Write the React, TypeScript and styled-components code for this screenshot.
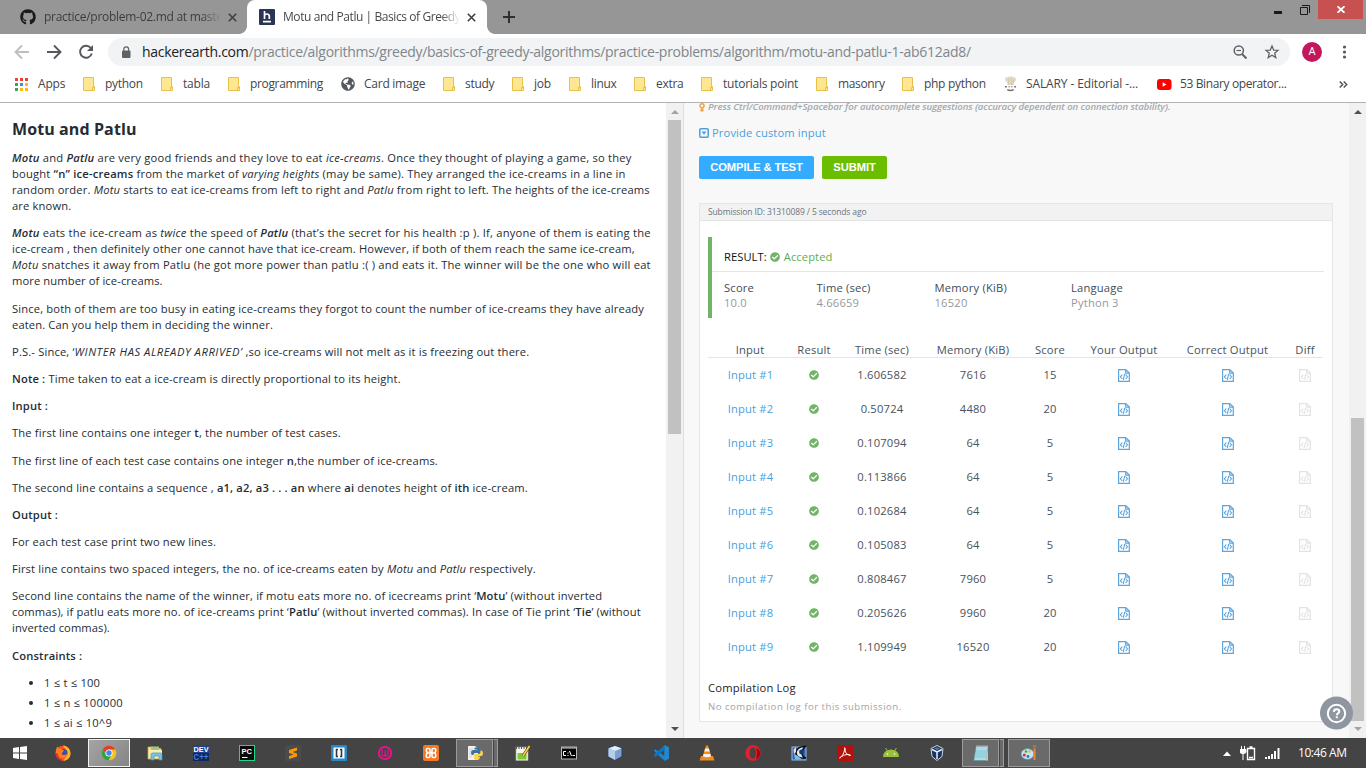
import React from "react";
import styled, { createGlobalStyle, css } from "styled-components";
import { FaGithub, FaCheckCircle, FaGlobeAmericas } from "react-icons/fa";

const Global = createGlobalStyle`
  * { box-sizing: border-box; }
  html, body { margin: 0; padding: 0; overflow: hidden; }
  body { font-family: "Open Sans", "Noto Sans", sans-serif; }
  svg { display: block; flex: none; }
`;

const Screen = styled.div`
  width: 1366px;
  height: 768px;
  display: flex;
  flex-direction: column;
  overflow: hidden;
  background: #fff;
`;

/* ---------- browser chrome ---------- */

const TabStrip = styled.div`
  height: 34px;
  flex: none;
  display: flex;
  background: #969696;
`;

const Tab = styled.div<{ $active?: boolean }>`
  position: relative;
  display: flex;
  align-items: center;
  width: ${(p) => (p.$active ? 240 : 247)}px;
  height: 34px;
  padding-left: ${(p) => (p.$active ? 12 : 20)}px;
  background: ${(p) => (p.$active ? "#fff" : "transparent")};
  border-radius: ${(p) => (p.$active ? "8px 8px 0 0" : "0")};
  color: ${(p) => (p.$active ? "#45494d" : "#3b3d40")};
  ${(p) =>
    p.$active &&
    css`
      &::before,
      &::after {
        content: "";
        position: absolute;
        bottom: 0;
        width: 8px;
        height: 8px;
      }
      &::before {
        left: -8px;
        background: radial-gradient(circle at 0 0, #969696 7.5px, #fff 8.2px);
      }
      &::after {
        right: -8px;
        background: radial-gradient(circle at 100% 0, #969696 7.5px, #fff 8.2px);
      }
    `}
`;

const TabTitle = styled.span<{ $spacing: number }>`
  width: 176px;
  margin-left: 8px;
  overflow: hidden;
  white-space: nowrap;
  font-size: 12px;
  line-height: 18px;
  letter-spacing: ${(p) => p.$spacing}px;
  mask-image: linear-gradient(90deg, #000 158px, transparent 177px);
`;

const TabClose = styled.span`
  margin-left: 8px;
`;

const NewTab = styled.div`
  padding: 11px 0 0 16px;
  flex: 1;
`;

const WindowButtons = styled.div`
  display: flex;
  align-items: flex-start;
  padding-right: 3px;
`;

const WindowButton = styled.div<{ $w: number; $close?: boolean }>`
  width: ${(p) => p.$w}px;
  height: 19px;
  display: flex;
  align-items: center;
  justify-content: center;
  background: ${(p) => (p.$close ? "#c75050" : "transparent")};
`;

const Toolbar = styled.div`
  height: 36px;
  flex: none;
  display: flex;
  align-items: center;
  padding-left: 14px;
`;

const NavIcons = styled.div`
  display: flex;
  gap: 16px;
  width: 94px;
`;

const Omnibox = styled.div`
  display: flex;
  align-items: center;
  width: 1182px;
  height: 28px;
  padding: 0 10px 0 13px;
  border-radius: 14px;
  background: #f1f3f4;
`;

const Url = styled.div`
  flex: 1;
  margin-left: 11px;
  font-size: 14px;
  line-height: 20px;
  letter-spacing: -0.29px;
  color: #80868b;
  white-space: nowrap;
  b {
    font-weight: 400;
    color: #202124;
  }
`;

const OmniActions = styled.div`
  display: flex;
  gap: 16px;
`;

const Avatar = styled.div`
  width: 20px;
  height: 20px;
  margin: 0 14px 0 12px;
  border-radius: 50%;
  background: #c2185b;
  color: #fff;
  font: 11px/20px Roboto, sans-serif;
  text-align: center;
`;

const Bookmarks = styled.div`
  height: 33px;
  flex: none;
  display: flex;
  align-items: center;
  padding: 0 18px 4px 15px;
  border-bottom: 1px solid #b2b2b4;
`;

const Bookmark = styled.div<{ $w: number }>`
  width: ${(p) => p.$w}px;
  flex: none;
  display: flex;
  align-items: center;
  white-space: nowrap;
  color: #43464a;
`;

const BookmarkIcon = styled.span<{ $w: number }>`
  width: ${(p) => p.$w}px;
  flex: none;
`;

const BookmarkLabel = styled.span<{ $spacing: number }>`
  font-size: 12px;
  line-height: 18px;
  letter-spacing: ${(p) => p.$spacing}px;
`;

/* ---------- page ---------- */

const Page = styled.div`
  height: 635px;
  flex: none;
  display: flex;
  overflow: hidden;
`;

const Problem = styled.article`
  width: 666px;
  flex: none;
  padding: 16px 0 0 12px;
  color: #252c33;
  font-size: 11.2px;
  line-height: 16px;
  letter-spacing: 0.15px;
  white-space: nowrap;
  overflow: hidden;
  strong {
    font-weight: 600;
  }
`;

const Title = styled.h1`
  margin: 0 0 11.21px;
  font-size: 16px;
  line-height: 20px;
  font-weight: 700;
  letter-spacing: 0.1px;
`;

const Para = styled.p`
  margin: 0 0 11.2px;
`;

const Line = styled.span<{ $spacing?: number }>`
  display: block;
  letter-spacing: ${(p) => p.$spacing ?? 0.15}px;
`;

const Shout = styled.em`
  letter-spacing: 0.55px;
`;

const Limits = styled.ul`
  margin: 0;
  padding-left: 32px;
  letter-spacing: 0.2px;
  li {
    margin-bottom: 4px;
  }
`;

const Scroll = styled.div`
  width: 17px;
  flex: none;
  display: flex;
  flex-direction: column;
  align-items: center;
  background: #f1f1f1;
`;

const Arrow = styled.i<{ $down?: boolean; $dark?: boolean }>`
  width: 0;
  height: 0;
  margin: ${(p) => (p.$down ? "auto 0 7px" : "7px 0 6px")};
  border: 4px solid transparent;
  border-top: ${(p) => (p.$down ? `4px solid ${p.$dark ? "#505050" : "#a3a3a3"}` : "0")};
  border-bottom: ${(p) => (p.$down ? "0" : `4px solid ${p.$dark ? "#505050" : "#a3a3a3"}`)};
`;

const Thumb = styled.div<{ $top: number; $h: number }>`
  width: 13px;
  height: ${(p) => p.$h}px;
  margin-top: ${(p) => p.$top}px;
  background: #c1c1c1;
`;

const Workspace = styled.section`
  flex: 1;
  padding-left: 16px;
  background: linear-gradient(90deg, #dedede 1px, #f8f8f8 1px);
  color: #46525e;
  font-size: 11.2px;
  letter-spacing: 0.2px;
  white-space: nowrap;
  overflow: hidden;
`;

const Hint = styled.div`
  display: flex;
  align-items: center;
  height: 12px;
  margin-top: -2px;
  gap: 3px;
  font-size: 9.6px;
  line-height: 12px;
  font-style: italic;
  font-weight: 600;
  letter-spacing: -0.08px;
  color: #a3a9ae;
`;

const CustomInput = styled.a`
  display: flex;
  align-items: center;
  gap: 3px;
  height: 16px;
  margin-top: 12px;
  line-height: 15px;
  color: #4a9fdf;
  letter-spacing: 0.12px;
  padding-bottom: 1px;
`;

const Actions = styled.div`
  display: flex;
  gap: 8px;
  margin-top: 15px;
`;

const Button = styled.button<{ $w: number; $bg: string }>`
  width: ${(p) => p.$w}px;
  height: 23px;
  padding: 0;
  border: 0;
  border-radius: 2px;
  background: ${(p) => p.$bg};
  color: #fff;
  font: bold 11.2px/23px "Liberation Sans", Arial, sans-serif;
  letter-spacing: -0.1px;
`;

const Card = styled.div`
  width: 634px;
  height: 519px;
  margin-top: 24px;
  border: 1px solid #e4e5e6;
  background: #fff;
`;

const CardHead = styled.div`
  height: 17px;
  padding-left: 8px;
  border-bottom: 1px solid #e4e5e6;
  background: #f2f2f2;
  font-size: 8.5px;
  line-height: 16px;
  letter-spacing: -0.13px;
  color: #6c757d;
`;

const Result = styled.div`
  height: 81px;
  margin: 16px 8px 0;
  border-left: 4px solid #71b367;
`;

const ResultLine = styled.div`
  display: flex;
  align-items: center;
  height: 35px;
  padding: 6px 0 0 12px;
  border-bottom: 1px solid #e4e5e6;
  color: #111;
  gap: 3.5px;
  font-size: 11.2px;
  line-height: 16px;
  letter-spacing: 0.05px;
  span {
    color: #5cb052;
    letter-spacing: 0.1px;
  }
`;

const Stats = styled.dl`
  display: grid;
  grid-template-columns: 92.5px 118px 136.5px auto;
  margin: 0;
  padding: 8px 0 0 12px;
  line-height: 15px;
  dt {
    font-weight: 500;
    color: #3f4b57;
  }
  dd {
    margin: 0;
    color: #95999d;
  }
`;

const Table = styled.div`
  margin: 23px 9px 0 8px;
`;

const Row = styled.div<{ $head?: boolean }>`
  display: grid;
  grid-template-columns: 84px 44px 92px 90px 64px 84px 123px 32px;
  align-items: center;
  justify-items: center;
  height: ${(p) => (p.$head ? 17 : 34)}px;
  border-bottom: ${(p) => (p.$head ? "1px solid #e4e5e6" : "0")};
  font-weight: ${(p) => (p.$head ? 500 : 400)};
  span,
  a {
    padding-bottom: ${(p) => (p.$head ? 0 : 2)}px;
  }
`;

const InputLink = styled.a`
  padding-left: 1px;
  letter-spacing: 0.15px;
  color: #4a9fdf;
`;

const Log = styled.div`
  margin: 15px 0 0 8px;
  line-height: 18px;
  color: #222;
  small {
    display: block;
    padding-top: 1px;
    font-size: 9.6px;
    letter-spacing: 0.5px;
    color: #a3a3a3;
  }
`;

const Help = styled.div`
  position: absolute;
  left: 1320px;
  top: 696px;
`;

/* ---------- taskbar ---------- */

const Taskbar = styled.div`
  height: 30px;
  flex: none;
  display: flex;
  background: #444;
  color: #fff;
`;

const Slot = styled.div<{ $w?: number }>`
  width: ${(p) => p.$w ?? 46}px;
  flex: none;
  display: flex;
  align-items: center;
  justify-content: center;
`;

const Running = styled.div<{ $w: number; $active?: boolean }>`
  width: ${(p) => p.$w}px;
  height: 28px;
  display: flex;
  align-items: center;
  justify-content: center;
  border: 1px solid ${(p) => (p.$active ? "#f2f2f2" : "#9c9c9c")};
  background: ${(p) => (p.$active ? "linear-gradient(135deg,#a4a4a4,#858585)" : "#6a6a6a")};
`;

const Stack = styled.div`
  width: 5px;
  height: 28px;
  border: 1px solid #9c9c9c;
  border-left-color: #444;
  background: #6a6a6a;
`;

const Tray = styled.div`
  margin-left: auto;
  display: flex;
  align-items: center;
  gap: 9px;
  padding-right: 18px;
`;

const Clock = styled.span`
  width: 50px;
  margin-left: 9px;
  font-size: 12px;
  line-height: 18px;
  letter-spacing: -0.45px;
  white-space: nowrap;
`;

/* ---------- icons ---------- */

const Folder = () => (
  <svg width="13" height="15" viewBox="0 0 13 15">
    <path d="M.5 .5H10.5V9.5H11.5V13.5H.5Z" fill="#ffe791" stroke="#e8c04a" />
    <path d="M9.5 13.5V10.5H11.5" fill="none" stroke="#e8c04a" />
  </svg>
);

const AppsGrid = () => {
  const colors = ["#ea4335", "#ea4335", "#ea4335", "#34a853", "#4285f4", "#fbbc04", "#34a853", "#fbbc04", "#fbbc04"];
  return (
    <svg width="13" height="13">
      {colors.map((c, i) => (
        <rect key={i} x={(i % 3) * 5} y={Math.floor(i / 3) * 5} width="3" height="3" fill={c} />
      ))}
    </svg>
  );
};

const Chef = () => (
  <svg width="13" height="16" viewBox="0 0 14 16">
    <path d="M1 3C1 1 4 0 7 0s6 1 6 3-2 3-2.500 4v2h-7V7C3 6 1 5 1 3Z" fill="#e6dcc6" />
    <path d="M5 2v7M8 1v8M10.500 3L9.500 9" stroke="#cdbf9c" strokeWidth=".8" />
    <path d="M1 11h2M5 11h1M8 11h1M11 11h2M3.500 14q3.500 2 7 0" fill="none" stroke="#77706a" strokeWidth="1.500" />
  </svg>
);

const YouTube = () => (
  <svg width="15" height="11" viewBox="0 0 15 11">
    <rect width="14.500" height="11" rx="3" fill="#f00" />
    <path d="M5.700 3.200L9.500 5.500 5.700 7.800Z" fill="#fff" />
  </svg>
);

const Cross = () => (
  <svg width="9" height="9" viewBox="0 0 9 9">
    <path d="M.8 .8L8.200 8.200M8.200 .8L.8 8.200" stroke="#3c4043" strokeWidth="1.600" />
  </svg>
);

const FileCode = ({ color, shade }: { color: string; shade: string }) => (
  <svg width="12" height="13" viewBox="0 0 12 13">
    <path d="M.6 .6H7.800L11.300 4V12.400H.6Z" fill="none" stroke={color} strokeWidth="1.200" />
    <path d="M7.500 .6V4.300H11.300Z" fill={shade} stroke={color} strokeWidth=".9" />
    <path d="M4.300 5.500L2.400 7.800 4.300 10M7.600 5.500L9.500 7.800 7.600 10M6.700 4.800L5.300 10.800" fill="none" stroke={color} strokeWidth="1.100" />
  </svg>
);

const Icon = ({ children, s = 16, v = 16 }: { children: React.ReactNode; s?: number; v?: number }) => (
  <svg width={s} height={s} viewBox={`0 0 ${v} ${v}`}>
    {children}
  </svg>
);

const Windows = () => (
  <Icon s={14} v={14}>
    <path d="M0 2L6 1V6.500H0ZM7 .9L14 0V6.500H7ZM0 7.500H6V13L0 12ZM7 7.500H14V14L7 13.100Z" fill="#fff" />
  </Icon>
);

const Firefox = () => (
  <Icon>
    <circle cx="8" cy="8.300" r="7.500" fill="#f5571d" />
    <path d="M8 .5C13 1 16 5 15.400 9.500 15 13 12 15.800 8 15.800L11 12 12.500 7Z" fill="#ffb81f" />
    <circle cx="8.500" cy="8" r="4" fill="#3b4fb0" />
    <path d="M1 5L2 1.500 5 4C7 3.500 8 5 9 5.500L7.500 7.500C6 8 7 10.500 9.500 10 11 10 12 9 12.500 8 13 12 9 13.500 6.500 13 2 12 0 9 1 5Z" fill="#ff7b1b" />
    <path d="M.8 8C1 13 5 16 9 15.700 5 14.500 3 12 3 9Z" fill="#e4204e" />
  </Icon>
);

const Chrome = () => (
  <Icon>
    <circle cx="8" cy="8" r="7.300" fill="#fbc116" />
    <path d="M1.700 4.300A7.300 7.300 0 0 1 14.400 4.500H8L5 9.500Z" fill="#e33b2e" />
    <path d="M1.700 4.300A7.300 7.300 0 0 0 7.500 15.300L10.800 9.800 5 9.800Z" fill="#2ba24c" />
    <circle cx="8" cy="8" r="3.600" fill="#fff" />
    <circle cx="8" cy="8" r="2.700" fill="#4285f4" />
  </Icon>
);

const Explorer = () => (
  <Icon>
    <path d="M1 2H6L7 3.500H14V14H1Z" fill="#f4e08e" stroke="#cdb25a" strokeWidth=".7" />
    <path d="M4 1.500H12V5H4Z" fill="#9fc58b" />
    <path d="M2 5H15V13H2Z" fill="#f9edb0" />
    <path d="M4 15V9.500Q4 8 5.500 8H13.500Q15 8 15 9.500V15H12V11H7V15Z" fill="#79c3e8" stroke="#4b91bd" strokeWidth=".7" />
  </Icon>
);

const PixelText = styled.text`
  font-family: "Liberation Sans", sans-serif;
  font-weight: 700;
`;

const DevCpp = () => (
  <Icon>
    <rect width="16" height="16" fill="#22418a" />
    <rect y="8" width="16" height="8" fill="#12285c" />
    <PixelText x="0.500" y="7" fontSize="7.500" fill="#fff" textLength="15" lengthAdjust="spacingAndGlyphs">DEV</PixelText>
    <PixelText x="0.500" y="15" fontSize="8.500" fill="#3f7fe0" textLength="15" lengthAdjust="spacingAndGlyphs">C++</PixelText>
  </Icon>
);

const PyCharm = () => (
  <Icon>
    <rect x=".5" y=".5" width="15" height="15" fill="#080b0a" stroke="#21d789" />
    <PixelText x="2.500" y="8.800" fontSize="8" fill="#fff" textLength="10.500" lengthAdjust="spacingAndGlyphs">PC</PixelText>
    <path d="M3 12.500H8.500" stroke="#fff" />
  </Icon>
);

const Sublime = () => (
  <Icon>
    <rect width="16" height="16" rx="1" fill="#4b4b4b" />
    <path d="M12 2.500V5.500L7.500 7 12 8.500V11.500L4 14V11L8.500 9.500 4 8V5Z" fill="#ff9800" />
  </Icon>
);

const Brackets = () => (
  <Icon>
    <rect width="16" height="16" rx="1" fill="#2488c9" />
    <rect x="2.500" y="2.500" width="11" height="11" fill="#fff" />
    <path d="M7 4.500H5.500V11.500H7M9 4.500H10.500V11.500H9" fill="none" stroke="#353535" strokeWidth="1.600" />
  </Icon>
);

const Wamp = () => (
  <Icon>
    <circle cx="8" cy="8" r="6.200" fill="none" stroke="#f70d90" strokeWidth="1.800" />
    <path d="M5 4.500V9.500Q5 11 6.500 11T8 9.500V5.500M8 9.500Q8 11 9.500 11T11 9.500V4.500" fill="none" stroke="#f70d90" strokeWidth="1.100" />
  </Icon>
);

const Xampp = () => (
  <Icon>
    <rect width="16" height="16" rx="2" fill="#f07a25" />
    <path d="M5.500 7.300H4.500Q3.300 7.300 3.300 6V4.800Q3.300 3.500 4.500 3.500H5.800Q7 3.500 7 4.800V6Q7 8 9 8H11.500Q12.700 8 12.700 9.500V11.200Q12.700 12.500 11.500 12.500H10.200Q9 12.500 9 11.200V4.800Q9 3.500 10.200 3.500H11.500Q12.700 3.500 12.700 4.800V6Q12.700 7.500 11 8H4.500Q3.300 8.500 3.300 9.800V11.200Q3.300 12.500 4.500 12.500H5.800Q7 12.500 7 11.200V9" fill="none" stroke="#fff" strokeWidth="1.500" />
  </Icon>
);

const Python = () => (
  <Icon>
    <path d="M1 1H8L11 3.500V15H1Z" fill="#f0f0f0" />
    <path d="M2 4H6M2 6H5M2 8H4M2 10H5M2 12H5" stroke="#ccc" strokeWidth=".7" />
    <path d="M8 2.500H11.500Q13 2.500 13 4V7Q13 8 12 8H8Q6.500 8 6.500 10H5.500Q4 10 4 7.500T6 5H10V4.500H7.500Q7 3 8 2.500Z" fill="#38729f" />
    <path d="M13.500 5.500H14.500Q16 6 16 8.500T14 11H10.500V11.500H13Q13 15 10 15T7 13V10.500Q7 9 8.500 9H12Q13.500 9 13.500 7Z" fill="#ffd343" />
  </Icon>
);

const NotepadPlus = () => (
  <Icon>
    <rect x="1" y="2" width="12" height="13.500" fill="#f2f5ec" stroke="#a7aa9d" strokeWidth=".6" />
    <path d="M1.500 1V4M4 1V4M6.500 1V4M9 1V4M11.500 1V4" stroke="#555" />
    <rect x="2.500" y="8" width="9" height="6.500" fill="#7dcc2d" />
    <path d="M14.500 1L8 11" stroke="#5b4723" strokeWidth="3" />
    <path d="M14.500 1L8 11" stroke="#ffc84a" strokeWidth="1.700" />
  </Icon>
);

const Cmd = () => (
  <Icon>
    <rect x=".5" y="2" width="15" height="12" fill="#000" stroke="#b8b8b8" />
    <path d="M1 3H15" stroke="#ddd" />
    <path d="M5 6.500H2.500V10.500H5M7 7.500V8.500M7 10V11M8.500 6L10.500 11M11.500 10.500H14" fill="none" stroke="#fff" />
  </Icon>
);

const Cube = () => (
  <Icon>
    <path d="M8 .5L15 3V11.500L8 15.500 1 11.500V3Z" fill="#7e9fce" stroke="#28416d" />
    <path d="M8 1L14.500 3.300 8 6 1.500 3.300Z" fill="#e2edf8" />
    <path d="M1.500 3.500L8 6V15L1.500 11.500Z" fill="#b7cde8" />
  </Icon>
);

const VSCode = () => (
  <Icon>
    <path d="M11.500 .3L15.800 2.300V13.700L11.500 15.700 .8 5.800 2.500 4.200 11.500 11.200V4.800L2.500 11.800 .8 10.200Z" fill="#1a86d2" />
    <path d="M11.500 .3L15.800 2.300V13.700L11.500 15.700Z" fill="#2489ca" />
    <path d="M.8 10.200L11.500 .3V4.800L2.500 11.800Z" fill="#0b72bd" />
  </Icon>
);

const Vlc = () => (
  <Icon>
    <path d="M2 11H14L15.500 15.500H.5Z" fill="#ef8a1d" />
    <path d="M7 .5H9L12.500 12Q8 14.500 3.500 12Z" fill="#f58b15" />
    <path d="M6.200 3.500H9.800L10.800 6.500H5.300ZM4.500 9H11.500L12 11.500Q8 13 4 11.500Z" fill="#f1f1f1" />
  </Icon>
);

const Opera = () => (
  <Icon>
    <ellipse cx="8" cy="8" rx="7.700" ry="7.900" fill="#e2202c" />
    <path d="M11.200 3Q16 5 15.200 10 14 13 11 14Q13 8 11.200 3Z" fill="#a70014" />
    <ellipse cx="7.800" cy="8" rx="3.200" ry="5.700" fill="#444" />
  </Icon>
);

const EyeTool = () => (
  <Icon>
    <rect x="1" y="2" width="14" height="13" fill="#2a62bd" stroke="#98bce9" />
    <path d="M5 7Q7 1 14.500 1.500Q11 4 11 8T15 13Q5 14 5 7Z" fill="#dbe9f7" stroke="#0b0b0b" strokeWidth="1.400" />
    <circle cx="10.500" cy="7" r="2.400" fill="#153b70" />
    <path d="M3 9L7 11 11 14.500H4Z" fill="#79c0e9" />
    <path d="M2.500 4.500L5 2V7L3 9Z" fill="#f6dfb0" />
  </Icon>
);

const Acrobat = () => (
  <Icon>
    <rect width="16" height="16" fill="#b3110c" />
    <path d="M3 13C5 12 8 6.500 7.500 3.500 7 2 9 3 8 5 8 8 11 10.500 13.500 10.500 14 9 8 9 4.500 11.500 2.500 12.500 2 13.500 3 13Z" fill="none" stroke="#fff" strokeWidth="1" />
  </Icon>
);

const Android = () => (
  <Icon>
    <path d="M0 12Q0 5 8 4.500 16 5 16 12Z" fill="#9ac03c" />
    <path d="M2.500 3L4.500 6M13.500 3L11.500 6" stroke="#9ac03c" />
    <circle cx="4.500" cy="9" r=".8" fill="#fff" />
    <circle cx="11.500" cy="9" r=".8" fill="#fff" />
  </Icon>
);

const VirtualBox = () => (
  <Icon>
    <path d="M8 .5L14 3.500 13 11.500 8 15.500 3 11.500 2 3.500Z" fill="#1b3561" stroke="#c6d4e8" />
    <path d="M3 4.500L8 7 13 4.500M8 7V14" fill="none" stroke="#e8eef6" strokeWidth="1.500" />
    <path d="M5 3.500L8 5 11 3.500 8 2.500Z" fill="#5b7dab" />
  </Icon>
);

const Notepad = () => (
  <Icon>
    <path d="M3 2H15L13.500 15.500H.8Z" fill="#a8dde9" stroke="#5d8e9a" strokeWidth=".6" />
    <path d="M3 6H13.500M2.800 8H13.300M2.500 10H13M2.300 12H12.800" stroke="#6fb6c6" strokeWidth=".6" />
    <path d="M4 .5V3M6 .5V3M8 .5V3M10 .5V3M12 .5V3M14 .5V3" stroke="#e5e5e5" />
    <path d="M13 15.500L15 3V15.500Z" fill="#d6c8a0" />
  </Icon>
);

const Paint = () => (
  <Icon>
    <ellipse cx="6.500" cy="9" rx="6.300" ry="5.300" fill="#c6e3f2" stroke="#6ba7c8" strokeWidth=".7" />
    <circle cx="3.300" cy="10" r="1.500" fill="#d2352b" />
    <circle cx="5" cy="6.500" r="1.300" fill="#3bab3f" />
    <circle cx="8.500" cy="6.500" r="1.300" fill="#e4ba22" />
    <circle cx="7" cy="11.500" r="1.400" fill="#3272cb" />
    <path d="M11.500 0H15.500L14.700 4H12.300Z" fill="#a4744b" />
    <path d="M12.500 4H14.500V15H12.500Z" fill="#ee862c" />
  </Icon>
);

/* ---------- data ---------- */

const folderBookmarks: [string, number, number][] = [
  ["python", 78, -0.3],
  ["tabla", 67, -0.2],
  ["programming", 113, -0.35],
];
const moreBookmarks: [string, number, number][] = [
  ["study", 69, -0.3],
  ["job", 57, -0.2],
  ["linux", 65, -0.3],
  ["extra", 67, -0.3],
  ["tutorials point", 115, -0.25],
  ["masonry", 86, -0.35],
  ["php python", 102, -0.3],
];

const runs: [string, string, number][] = [
  ["1.606582", "7616", 15],
  ["0.50724", "4480", 20],
  ["0.107094", "64", 5],
  ["0.113866", "64", 5],
  ["0.102684", "64", 5],
  ["0.105083", "64", 5],
  ["0.808467", "7960", 5],
  ["0.205626", "9960", 20],
  ["1.109949", "16520", 20],
];

const FolderMark = ({ label, w, spacing }: { label: string; w: number; spacing: number }) => (
  <Bookmark $w={w}>
    <BookmarkIcon $w={22}><Folder /></BookmarkIcon>
    <BookmarkLabel $spacing={spacing}>{label}</BookmarkLabel>
  </Bookmark>
);

const apps = [Explorer, DevCpp, PyCharm, Sublime, Brackets, Wamp, Xampp];
const moreApps = [NotepadPlus, Cmd, Cube, VSCode, Vlc, Opera, EyeTool, Acrobat, Android, VirtualBox];

export default function App() {
  return (
    <Screen>
      <Global />
      <TabStrip>
        <Tab>
          <FaGithub size={16} color="#1b1b1b" />
          <TabTitle $spacing={-0.28}>practice/problem-02.md at master</TabTitle>
          <TabClose><Cross /></TabClose>
        </Tab>
        <Tab $active>
          <Icon>
            <rect width="16" height="16" rx="1" fill="#2c3454" />
            <path d="M5.500 2V10M5.500 6.500Q6 5 8 5T10.300 7V10M4 12.700H12" fill="none" stroke="#fff" strokeWidth="1.700" />
          </Icon>
          <TabTitle $spacing={-0.42}>Motu and Patlu | Basics of Greedy</TabTitle>
          <TabClose><Cross /></TabClose>
        </Tab>
        <NewTab>
          <svg width="12" height="12"><path d="M6 0V12M0 6H12" stroke="#2d2f31" strokeWidth="2" /></svg>
        </NewTab>
        <WindowButtons>
          <WindowButton $w={26}>
            <svg width="8" height="8"><path d="M0 6.500H8" stroke="#1a1a1a" strokeWidth="3" /></svg>
          </WindowButton>
          <WindowButton $w={27}>
            <svg width="10" height="10" viewBox="0 0 10 10">
              <path d="M.5 2.500H7.500V9.500H.5ZM2 .5H9.500V8" fill="none" stroke="#1a1a1a" />
            </svg>
          </WindowButton>
          <WindowButton $w={45} $close>
            <svg width="8" height="7"><path d="M.5 .2L7.500 6.800M7.500 .2L.5 6.800" stroke="#fff" strokeWidth="1.800" /></svg>
          </WindowButton>
        </WindowButtons>
      </TabStrip>
      <Toolbar>
        <NavIcons>
          <svg width="16" height="16" viewBox="0 0 16 16"><path d="M15 8H2M8 1.500L1.500 8 8 14.500" fill="none" stroke="#bcbec0" strokeWidth="1.900" /></svg>
          <svg width="16" height="16" viewBox="0 0 16 16"><path d="M1 8H14M8 1.500L14.500 8 8 14.500" fill="none" stroke="#55585c" strokeWidth="1.900" /></svg>
          <svg width="16" height="16" viewBox="0 0 16 16">
            <path d="M12.800 4A6 6 0 1 0 13.800 9.500" fill="none" stroke="#55585c" strokeWidth="1.900" />
            <path d="M15 1V7H9Z" fill="#55585c" />
          </svg>
        </NavIcons>
        <Omnibox>
          <svg width="10" height="12" viewBox="0 0 10 12">
            <rect x="1" y="4.500" width="8.500" height="7.500" rx="1" fill="#5f6368" />
            <path d="M2.800 5V3.200a2.400 2.400 0 0 1 4.800 0V5" fill="none" stroke="#5f6368" strokeWidth="1.200" />
          </svg>
          <Url><b>hackerearth.com</b>/practice/algorithms/greedy/basics-of-greedy-algorithms/practice-problems/algorithm/motu-and-patlu-1-ab612ad8/</Url>
          <OmniActions>
            <svg width="16" height="16" viewBox="0 0 16 16">
              <circle cx="6.800" cy="6.500" r="4.600" fill="none" stroke="#5f6368" strokeWidth="1.500" />
              <path d="M10 10L14.500 14.500" stroke="#5f6368" strokeWidth="2" />
              <path d="M4.500 6.500H9" stroke="#5f6368" strokeWidth="1.200" />
            </svg>
            <svg width="16" height="16" viewBox="0 0 16 16">
              <path d="M8 2L9.700 6.100 14 6.400 10.700 9.300 11.800 13.600 8 11.300 4.200 13.600 5.300 9.300 2 6.400 6.300 6.100Z" fill="none" stroke="#5f6368" strokeWidth="1.300" />
            </svg>
          </OmniActions>
        </Omnibox>
        <Avatar>A</Avatar>
        <svg width="16" height="16" viewBox="0 0 16 16" fill="#55585c">
          <circle cx="8.500" cy="3" r="1.600" /><circle cx="8.500" cy="8" r="1.600" /><circle cx="8.500" cy="13" r="1.600" />
        </svg>
      </Toolbar>
      <Bookmarks>
        <Bookmark $w={68}>
          <BookmarkIcon $w={23}><AppsGrid /></BookmarkIcon>
          <BookmarkLabel $spacing={-0.2}>Apps</BookmarkLabel>
        </Bookmark>
        {folderBookmarks.map(([l, w, s]) => <FolderMark key={l} label={l} w={w} spacing={s} />)}
        <Bookmark $w={102}>
          <BookmarkIcon $w={23}><FaGlobeAmericas size={14} color="#55585c" /></BookmarkIcon>
          <BookmarkLabel $spacing={-0.25}>Card image</BookmarkLabel>
        </Bookmark>
        {moreBookmarks.map(([l, w, s]) => <FolderMark key={l} label={l} w={w} spacing={s} />)}
        <Bookmark $w={153}>
          <BookmarkIcon $w={22}><Chef /></BookmarkIcon>
          <BookmarkLabel $spacing={-0.12}>SALARY - Editorial -...</BookmarkLabel>
        </Bookmark>
        <Bookmark $w={182}>
          <BookmarkIcon $w={23}><YouTube /></BookmarkIcon>
          <BookmarkLabel $spacing={-0.38}>53 Binary operator...</BookmarkLabel>
        </Bookmark>
        <svg width="9" height="7" viewBox="0 0 9 7"><path d="M.7 .5L3.700 3.500 .7 6.500M4.700 .5L7.700 3.500 4.700 6.500" fill="none" stroke="#55585c" strokeWidth="1.500" /></svg>
      </Bookmarks>

      <Page>
        <Problem>
          <Title>Motu and Patlu</Title>
          <Para>
            <Line $spacing={0.21}><strong><em>Motu</em></strong> and <strong><em>Patlu</em></strong> are very good friends and they love to eat <em>ice-creams</em>. Once they thought of playing a game, so they</Line>
            <Line $spacing={0.19}>bought <strong>“n” ice-creams</strong> from the market of <em>varying heights</em> (may be same). They arranged the ice-creams in a line in</Line>
            <Line $spacing={0.165}>random order. <em>Motu</em> starts to eat ice-creams from left to right and <em>Patlu</em> from right to left. The heights of the ice-creams</Line>
            <Line $spacing={0.15}>are known.</Line>
          </Para>
          <Para>
            <Line $spacing={0.21}><strong><em>Motu</em></strong> eats the ice-cream as <em>twice</em> the speed of <strong><em>Patlu</em></strong> (that’s the secret for his health :p ). If, anyone of them is eating the</Line>
            <Line $spacing={0.12}>ice-cream , then definitely other one cannot have that ice-cream. However, if both of them reach the same ice-cream,</Line>
            <Line $spacing={0.2}><em>Motu</em> snatches it away from Patlu (he got more power than patlu :( ) and eats it. The winner will be the one who will eat</Line>
            <Line $spacing={0.1}>more number of ice-creams.</Line>
          </Para>
          <Para>
            <Line $spacing={0.145}>Since, both of them are too busy in eating ice-creams they forgot to count the number of ice-creams they have already</Line>
            <Line $spacing={0.12}>eaten. Can you help them in deciding the winner.</Line>
          </Para>
          <Para>P.S.- Since, ‘<Shout>WINTER HAS ALREADY ARRIVED’</Shout> ,so ice-creams will not melt as it is freezing out there.</Para>
          <Para><strong>Note :</strong> Time taken to eat a ice-cream is directly proportional to its height.</Para>
          <Para><strong>Input :</strong></Para>
          <Para>The first line contains one integer <strong>t</strong>, the number of test cases.</Para>
          <Para>The first line of each test case contains one integer <strong>n</strong>,the number of ice-creams.</Para>
          <Para>The second line contains a sequence , <strong>a1, a2, a3 . . . an</strong> where <strong>ai</strong> denotes height of <strong>ith</strong> ice-cream.</Para>
          <Para><strong>Output :</strong></Para>
          <Para>For each test case print two new lines.</Para>
          <Para>First line contains two spaced integers, the no. of ice-creams eaten by <em>Motu</em> and <em>Patlu</em> respectively.</Para>
          <Para>
            <Line $spacing={0.14}>Second line contains the name of the winner, if motu eats more no. of icecreams print ‘<strong>Motu</strong>’ (without inverted</Line>
            <Line $spacing={0.13}>commas), if patlu eats more no. of ice-creams print ‘<strong>Patlu</strong>’ (without inverted commas). In case of Tie print ‘<strong>Tie</strong>’ (without</Line>
            <Line $spacing={0.06}>inverted commas).</Line>
          </Para>
          <Para><strong>Constraints :</strong></Para>
          <Limits>
            <li>1 ≤ t ≤ 100</li>
            <li>1 ≤ n ≤ 100000</li>
            <li>1 ≤ ai ≤ 10^9</li>
          </Limits>
        </Problem>
        <Scroll>
          <Arrow />
          <Thumb $top={0} $h={314} />
          <Arrow $down $dark />
        </Scroll>
        <Workspace>
          <Hint>
            <svg width="6" height="9" viewBox="0 0 6 9">
              <circle cx="3" cy="2.800" r="2.100" fill="none" stroke="#f4a13c" strokeWidth="1.400" />
              <path d="M1.500 5.500H4.500V8.500H1.500Z" fill="#f4a13c" />
            </svg>
            Press Ctrl/Command+Spacebar for autocomplete suggestions (accuracy dependent on connection stability).
          </Hint>
          <CustomInput>
            <svg width="10" height="10" viewBox="0 0 10 10">
              <rect x=".8" y=".8" width="8.400" height="8.400" rx="1" fill="none" stroke="#4a9fdf" strokeWidth="1.500" />
              <path d="M2.500 3.500H7.500L5 6.800Z" fill="#4a9fdf" />
            </svg>
            Provide custom input
          </CustomInput>
          <Actions>
            <Button $w={115} $bg="#33abff">COMPILE &amp; TEST</Button>
            <Button $w={65} $bg="#6bbd00">SUBMIT</Button>
          </Actions>
          <Card>
            <CardHead>Submission ID: 31310089 / 5 seconds ago</CardHead>
            <Result>
              <ResultLine>
                RESULT: <FaCheckCircle size={10} color="#71b367" /> <span>Accepted</span>
              </ResultLine>
              <Stats>
                <dt>Score</dt><dt>Time (sec)</dt><dt>Memory (KiB)</dt><dt>Language</dt>
                <dd>10.0</dd><dd>4.66659</dd><dd>16520</dd><dd>Python 3</dd>
              </Stats>
            </Result>
            <Table>
              <Row $head>
                <span>Input</span><span>Result</span><span>Time (sec)</span><span>Memory (KiB)</span>
                <span>Score</span><span>Your Output</span><span>Correct Output</span><span>Diff</span>
              </Row>
              {runs.map(([time, mem, score], i) => (
                <Row key={i}>
                  <InputLink>Input #{i + 1}</InputLink>
                  <FaCheckCircle size={10} color="#71b367" />
                  <span>{time}</span>
                  <span>{mem}</span>
                  <span>{score}</span>
                  <FileCode color="#5ba5e0" shade="#a9d0f0" />
                  <FileCode color="#5ba5e0" shade="#a9d0f0" />
                  <FileCode color="#e3e3e3" shade="#efefef" />
                </Row>
              ))}
            </Table>
            <Log>
              Compilation Log
              <small>No compilation log for this submission.</small>
            </Log>
          </Card>
        </Workspace>
        <Scroll>
          <Arrow $dark />
          <Thumb $top={298} $h={303} />
          <Arrow $down />
        </Scroll>
      </Page>
      <Help>
        <svg width="33" height="34" viewBox="0 0 33 34">
          <circle cx="16.500" cy="17" r="16.500" fill="#8f969f" />
          <circle cx="16.500" cy="17.500" r="8.700" fill="none" stroke="#fff" strokeWidth="2" />
          <path d="M13.800 15.800Q14 13.300 16.600 13.300T19.300 15.500C19.300 17.200 16.800 17.200 16.800 19.200M16.800 20.300V22.200" fill="none" stroke="#fff" strokeWidth="2" />
        </svg>
      </Help>

      <Taskbar>
        <Slot $w={40}><Windows /></Slot>
        <Slot><Firefox /></Slot>
        <Slot><Running $w={42} $active><Chrome /></Running></Slot>
        {apps.map((A, i) => <Slot key={i}><A /></Slot>)}
        <Slot><Running $w={37}><Python /></Running><Stack /></Slot>
        {moreApps.map((A, i) => <Slot key={i}><A /></Slot>)}
        <Slot><Running $w={37}><Notepad /></Running><Stack /></Slot>
        <Slot><Running $w={42}><Paint /></Running></Slot>
        <Tray>
          <svg width="8" height="5"><path d="M0 5L4 .5 8 5Z" fill="#fff" /></svg>
          <svg width="16" height="16" viewBox="0 0 16 16">
            <path d="M1.500 1V4M4.500 1V4M0 4.500H6V7Q6 8.500 3 8.500T0 7ZM3 8V15" fill="#fff" stroke="#fff" />
            <path d="M7.500 3.500H14.500V14.500H7.500ZM9.500 2H12.500M9 12.500H13" fill="none" stroke="#fff" strokeWidth="1.400" />
          </svg>
          <svg width="15" height="12"><path d="M0 10H2V12H0ZM3 9H5V12H3ZM6 7H8V12H6ZM9 4H11V12H9ZM12.500 1H14.500V12H12.500Z" fill="#fff" /></svg>
          <Clock>10:46 AM</Clock>
        </Tray>
      </Taskbar>
    </Screen>
  );
}
